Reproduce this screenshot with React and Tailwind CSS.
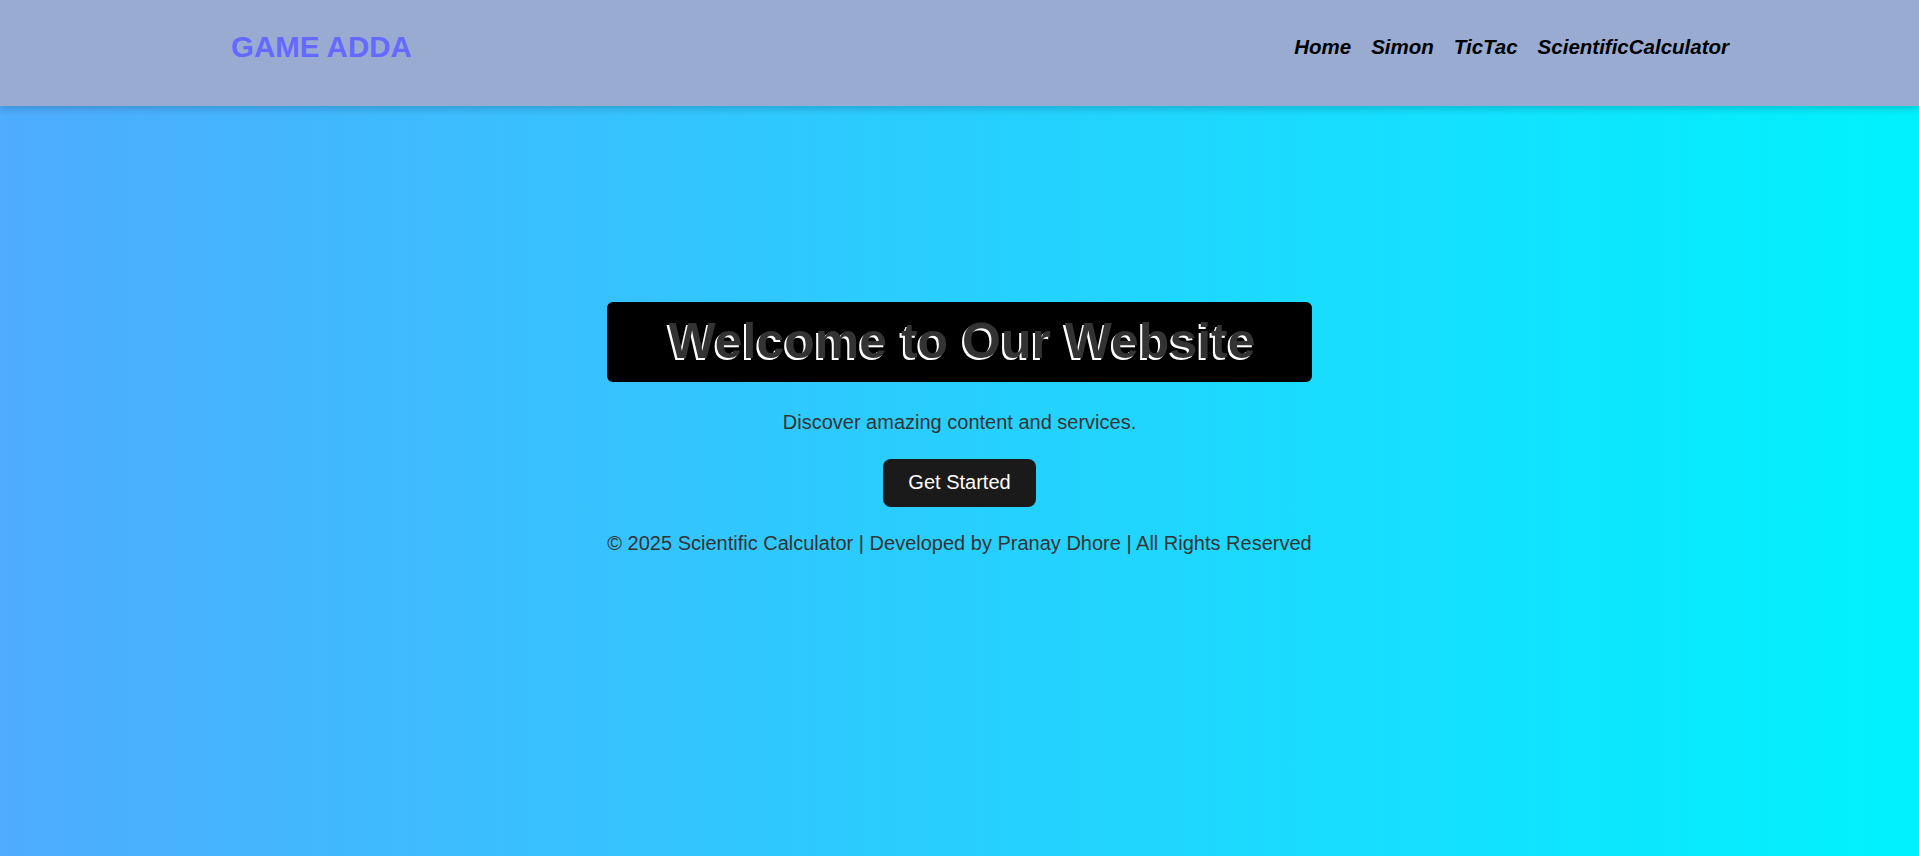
import React from "react";

const navLinks = ["Home", "Simon", "TicTac", "ScientificCalculator"];

function Navbar() {
  return (
    <header className="h-[106px] bg-[#99abd0] shadow-[0_3px_8px_rgba(0,0,0,0.18)] relative z-10">
      <div className="flex items-center justify-between h-[94px] pl-[231px] pr-[190px]">
        <a href="#" className="text-[29.5px] font-bold text-[#6669ff] leading-none">
          GAME ADDA
        </a>
        <nav className="flex items-center gap-[20px]">
          {navLinks.map((link) => (
            <a
              key={link}
              href="#"
              className="text-[20.5px] font-bold italic text-black leading-none"
            >
              {link}
            </a>
          ))}
        </nav>
      </div>
    </header>
  );
}

function Hero() {
  return (
    <main className="flex-1 flex items-center justify-center pb-[106px]">
      <div className="flex flex-col items-stretch text-center">
        {/* title box */}
        <h1 className="bg-black rounded-md h-[80px] flex items-center justify-center pl-[5px] text-[50px] font-bold text-[#333] [text-shadow:-2px_2px_0_#fff] mb-[29px]">
          Welcome to Our Website
        </h1>
        <p className="text-[20px] text-[#333] leading-[23px] mb-[25px]">
          Discover amazing content and services.
        </p>
        <div className="flex justify-center mb-[25px]">
          <button className="bg-[#1a1a1a] text-white text-[20px] leading-[23px] rounded-lg h-[48px] px-[25px]">
            Get Started
          </button>
        </div>
        <p className="text-[20px] text-[#333] leading-[23px] whitespace-nowrap">
          © 2025 Scientific Calculator | Developed by Pranay Dhore | All Rights Reserved
        </p>
      </div>
    </main>
  );
}

export default function App() {
  return (
    <div className="min-h-screen flex flex-col bg-[linear-gradient(to_right,#4facfe,#00f2fe)] font-['Liberation_Sans',Arial,sans-serif]">
      <Navbar />
      <Hero />
    </div>
  );
}
